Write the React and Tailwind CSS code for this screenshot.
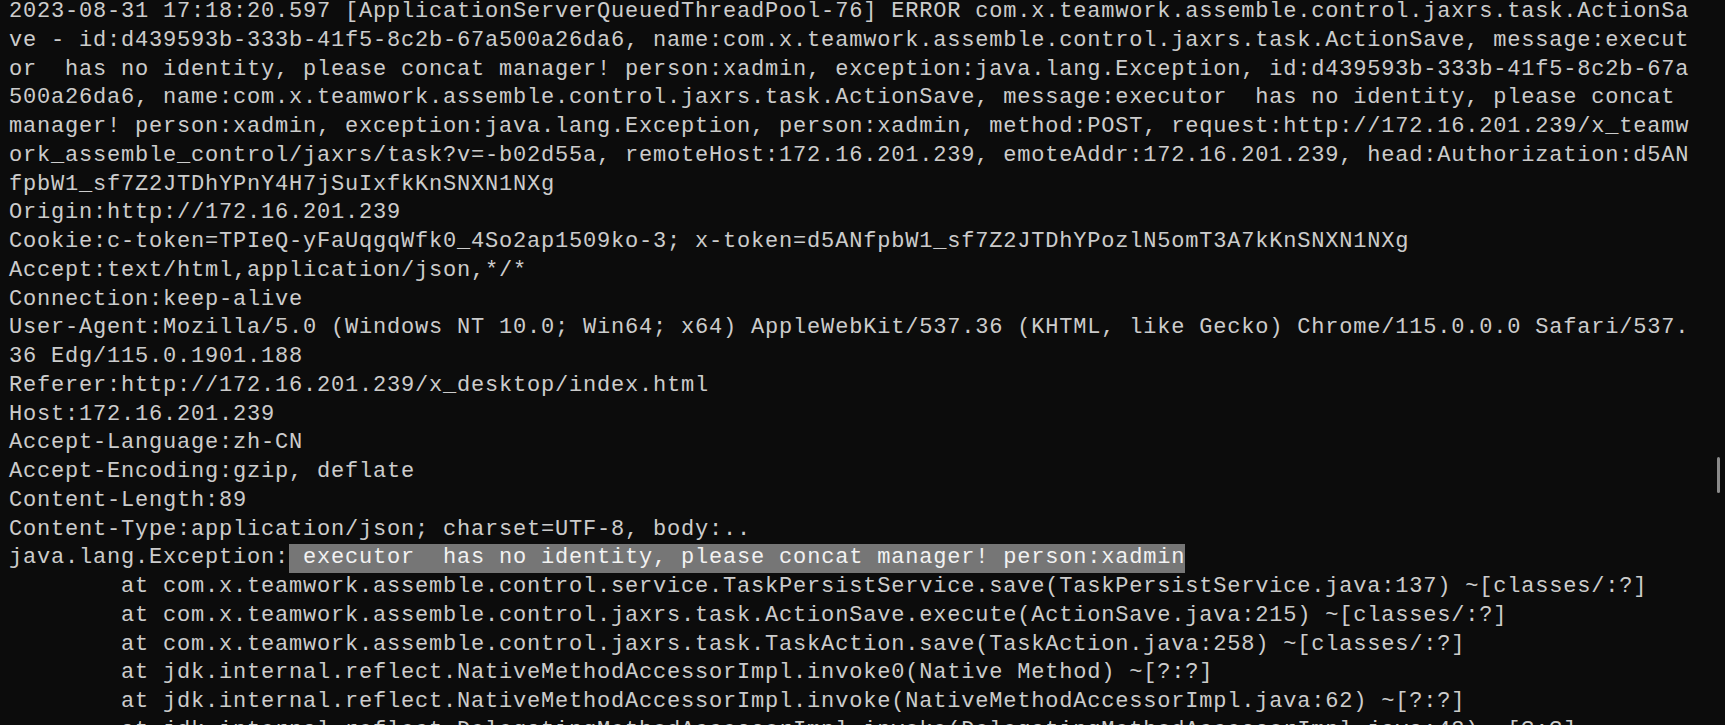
import React from "react";

const TAB = "        ";

const lines = [
  "2023-08-31 17:18:20.597 [ApplicationServerQueuedThreadPool-76] ERROR com.x.teamwork.assemble.control.jaxrs.task.ActionSa",
  "ve - id:d439593b-333b-41f5-8c2b-67a500a26da6, name:com.x.teamwork.assemble.control.jaxrs.task.ActionSave, message:execut",
  "or  has no identity, please concat manager! person:xadmin, exception:java.lang.Exception, id:d439593b-333b-41f5-8c2b-67a",
  "500a26da6, name:com.x.teamwork.assemble.control.jaxrs.task.ActionSave, message:executor  has no identity, please concat ",
  "manager! person:xadmin, exception:java.lang.Exception, person:xadmin, method:POST, request:http://172.16.201.239/x_teamw",
  "ork_assemble_control/jaxrs/task?v=-b02d55a, remoteHost:172.16.201.239, emoteAddr:172.16.201.239, head:Authorization:d5AN",
  "fpbW1_sf7Z2JTDhYPnY4H7jSuIxfkKnSNXN1NXg",
  "Origin:http://172.16.201.239",
  "Cookie:c-token=TPIeQ-yFaUqgqWfk0_4So2ap1509ko-3; x-token=d5ANfpbW1_sf7Z2JTDhYPozlN5omT3A7kKnSNXN1NXg",
  "Accept:text/html,application/json,*/*",
  "Connection:keep-alive",
  "User-Agent:Mozilla/5.0 (Windows NT 10.0; Win64; x64) AppleWebKit/537.36 (KHTML, like Gecko) Chrome/115.0.0.0 Safari/537.",
  "36 Edg/115.0.1901.188",
  "Referer:http://172.16.201.239/x_desktop/index.html",
  "Host:172.16.201.239",
  "Accept-Language:zh-CN",
  "Accept-Encoding:gzip, deflate",
  "Content-Length:89",
  "Content-Type:application/json; charset=UTF-8, body:..",
];

const stack = [
  "at com.x.teamwork.assemble.control.service.TaskPersistService.save(TaskPersistService.java:137) ~[classes/:?]",
  "at com.x.teamwork.assemble.control.jaxrs.task.ActionSave.execute(ActionSave.java:215) ~[classes/:?]",
  "at com.x.teamwork.assemble.control.jaxrs.task.TaskAction.save(TaskAction.java:258) ~[classes/:?]",
  "at jdk.internal.reflect.NativeMethodAccessorImpl.invoke0(Native Method) ~[?:?]",
  "at jdk.internal.reflect.NativeMethodAccessorImpl.invoke(NativeMethodAccessorImpl.java:62) ~[?:?]",
  "at jdk.internal.reflect.DelegatingMethodAccessorImpl.invoke(DelegatingMethodAccessorImpl.java:43) ~[?:?]",
];

const App = () => {
  return (
    <div className="relative w-[1725px] h-[725px] overflow-hidden bg-[#0c0c0c] text-[#cccccc]">
      <div className="-mt-[2px] pl-[9px] font-['Liberation_Mono',monospace] text-[22px] leading-[28.75px] tracking-[0.8px] whitespace-pre">
        {lines.map((line, i) => (
          <div key={i}>{line}</div>
        ))}
        <div>
          java.lang.Exception:
          <span className="inline-block leading-[28.75px] bg-[#767676] text-[#f2f2f2]">
            {" executor  has no identity, please concat manager! person:xadmin"}
          </span>
        </div>
        {stack.map((line, i) => (
          <div key={i}>{TAB + line}</div>
        ))}
      </div>

      {/* scrollbar thumb */}
      <div className="absolute left-[1717px] top-[457px] w-[3px] h-[36px] rounded-full bg-[#8b8b8b]" />
    </div>
  );
};

export default App;
